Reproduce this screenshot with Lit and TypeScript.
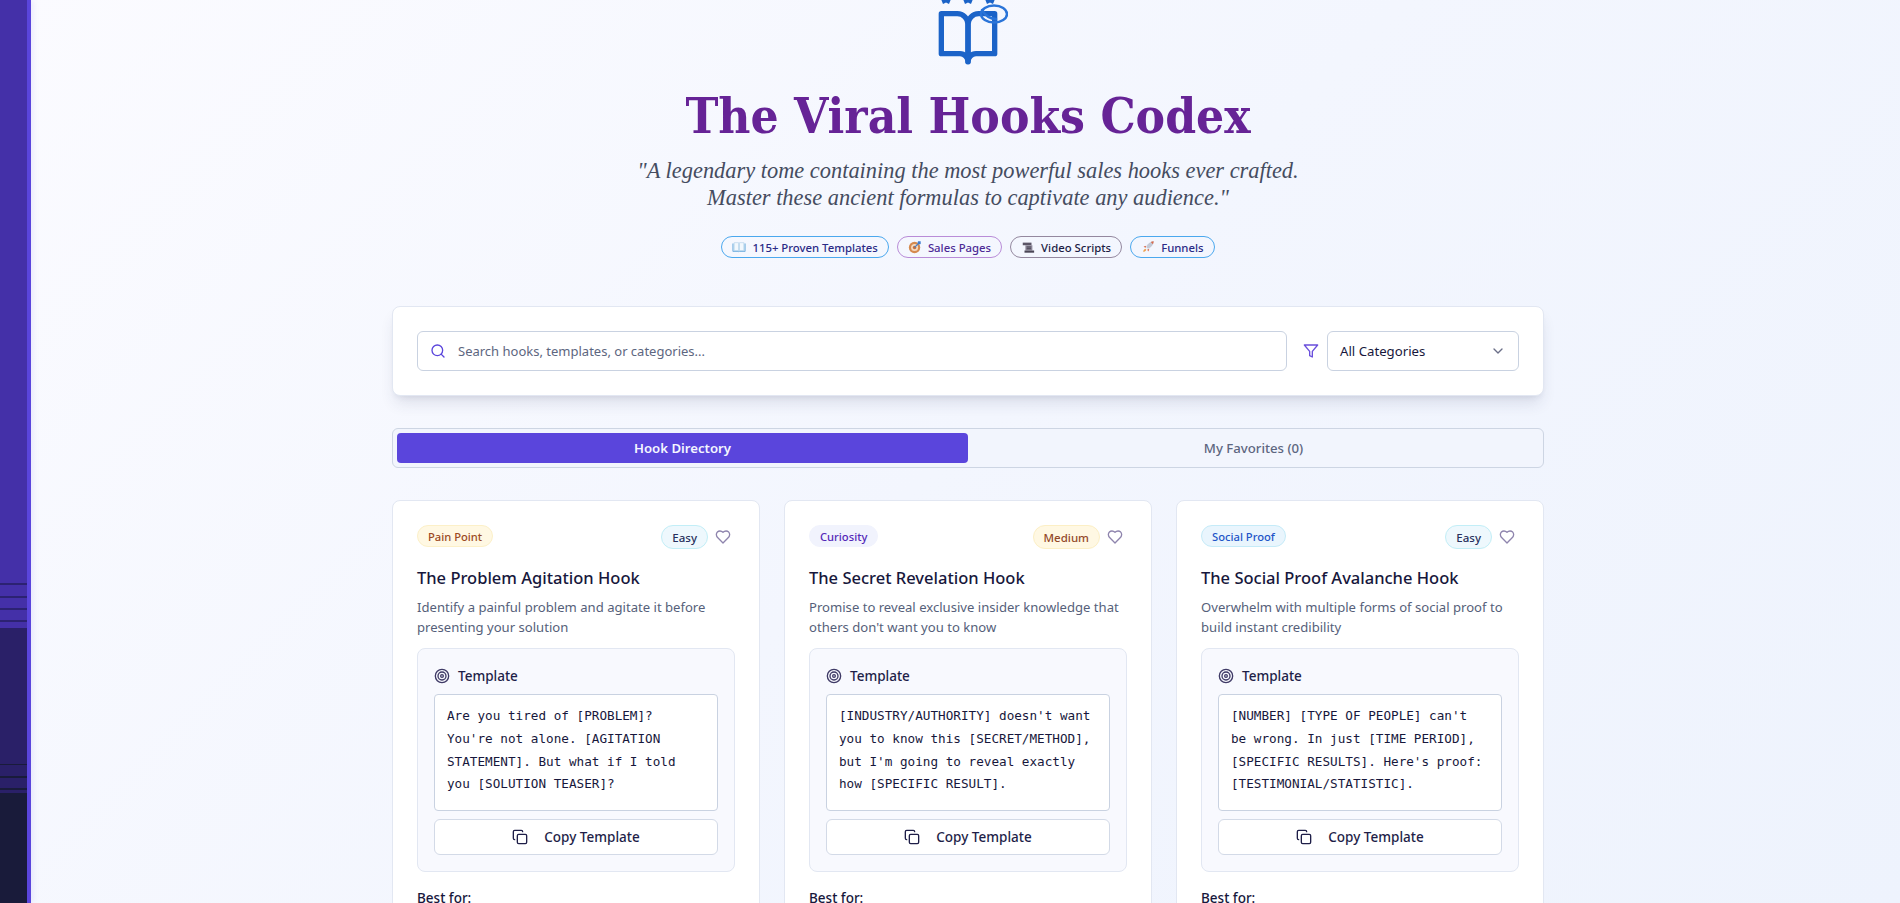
import { LitElement, html, css, svg } from "lit";
import { customElement } from "lit/decorators.js";

const hooks = [
  { cat: "Pain Point", catCls: "pain", level: "Easy", lvlCls: "easy", title: "The Problem Agitation Hook",
    desc: "Identify a painful problem and agitate it before presenting your solution",
    tpl: "Are you tired of [PROBLEM]? You're not alone. [AGITATION STATEMENT]. But what if I told you [SOLUTION TEASER]?" },
  { cat: "Curiosity", catCls: "cur", level: "Medium", lvlCls: "med", title: "The Secret Revelation Hook",
    desc: "Promise to reveal exclusive insider knowledge that others don't want you to know",
    tpl: "[INDUSTRY/AUTHORITY] doesn't want you to know this [SECRET/METHOD], but I'm going to reveal exactly how [SPECIFIC RESULT]." },
  { cat: "Social Proof", catCls: "soc", level: "Easy", lvlCls: "easy", title: "The Social Proof Avalanche Hook",
    desc: "Overwhelm with multiple forms of social proof to build instant credibility",
    tpl: "[NUMBER] [TYPE OF PEOPLE] can't be wrong. In just [TIME PERIOD], [SPECIFIC RESULTS]. Here's proof: [TESTIMONIAL/STATISTIC]." },
];

const bookEmoji = svg`<svg class="emo" viewBox="0 0 16 16"><path d="M1 4v9h6.2l.8.8.8-.8H15V4" fill="#cfe6f7" stroke="#6aa9dc"/><path d="M2.5 3h5v9h-5zM8.5 3h5v9h-5z" fill="#f2f8fd" stroke="#a9cbe6" stroke-width=".6"/></svg>`;
const targetEmoji = svg`<svg class="emo" viewBox="0 0 16 16"><circle cx="7.5" cy="8.5" r="6.5" fill="#d58a4f"/><circle cx="7.5" cy="8.5" r="4" fill="#f3d9bf"/><circle cx="7.5" cy="8.5" r="2" fill="#c8703a"/><path d="M7.5 8.5 13 3" stroke="#3f7fd0" stroke-width="1.4"/><path d="M11.5 1.5h3v3l-2 .6-1.6-1.6z" fill="#3f7fd0"/></svg>`;
const scrollEmoji = svg`<svg class="emo" viewBox="0 0 16 16"><path d="M2 3h10v3H2z" fill="#5b5566"/><path d="M5 6h8v6H5z" fill="#8d8798"/><path d="M4 12h11v2.5H4z" fill="#4b4656"/><path d="M6.5 8h5M6.5 10h5" stroke="#3d3948"/></svg>`;
const rocketEmoji = svg`<svg class="emo" viewBox="0 0 16 16"><path d="M14.5 1.5c-4 .3-6.8 2.5-8.5 6.5l2 2c4-1.7 6.2-4.5 6.5-8.5z" fill="#c3c9d6"/><path d="M14.5 1.5c-1.3.1-2.3.4-3.3.9l2.4 2.4c.5-1 .8-2 .9-3.3z" fill="#d9694a"/><path d="M6 6.5 3 7.5l2 1.5zM9.5 10 8.5 13l-1.500-2z" fill="#d9694a"/><path d="M5 10c-1.5.5-2.5 2-2.5 3.5 1.5 0 3-1 3.5-2.5z" fill="#eda04c"/></svg>`;

@customElement("app-root")
export class AppRoot extends LitElement {
  static styles = css`
    :host { display: block; height: 903px; overflow: hidden; font-family: "Noto Sans", "Open Sans", sans-serif; }
    * { box-sizing: border-box; }
    .shell { display: flex; height: 903px; background: linear-gradient(135deg, #fbfbff 0%, #f3f6fe 50%, #eef3fd 100%); }
    .rail {
      flex: none; width: 31px; height: 903px; border-right: 4px solid #5a45dc;
      box-shadow: 2px 0 6px rgba(90, 69, 220, 0.1);
      background:
        linear-gradient(to bottom,
          #4430a8 0 583px, #2c2272 583px 585px, #4430a8 585px 596px, #2c2272 596px 598px,
          #4430a8 598px 608px, #2c2272 608px 610px, #4430a8 610px 620px, #2c2272 620px 622px,
          #4430a8 622px 628px, #2a2068 628px 764px, #191b3a 764px 765px, #2a2068 765px 776px,
          #191b3a 776px 778px, #2a2068 778px 788px, #191b3a 788px 790px, #2a2068 790px 793px,
          #191b3a 793px 903px);
    }
    main { flex: 1; min-width: 0; padding-left: 5px; overflow: hidden; }
    .page { width: 1152px; margin: 0 auto; }
    header { display: flex; flex-direction: column; align-items: center; }
    .logo { display: block; width: 80px; height: 68px; }
    h1 {
      margin: 18px 0 0; font-family: "DejaVu Serif Condensed", "DejaVu Serif", serif; font-weight: 700;
      font-size: 49.2px; line-height: 60px; color: #662396; white-space: nowrap;
    }
    .sub {
      margin: 11px 0 0; text-align: center; font-family: "Liberation Serif", serif; font-style: italic;
      font-size: 22.4px; line-height: 27px; color: #454c60;
    }
    .chips { display: flex; gap: 8px; margin-top: 25px; }
    .chip {
      display: flex; align-items: center; gap: 6px; height: 22px; padding: 0 10px; border-radius: 11px;
      border: 1px solid #4ba8ee; font-size: 11.35px; font-weight: 500; color: #2a2a86; background: transparent;
    }
    .chip.v { border-color: #b98cd8; color: #4c2a96; }
    .chip.s { border-color: #94889f; color: #1c1c44; }
    .emo { width: 14px; height: 14px; flex: none; }
    .search {
      margin-top: 48px; height: 90px; display: flex; align-items: center; gap: 12px; padding: 0 24px;
      background: #fff; border: 1px solid #e2e7f2; border-radius: 8px;
      box-shadow: 0 10px 15px -3px rgba(40, 50, 90, 0.12), 0 4px 6px -4px rgba(40, 50, 90, 0.12);
    }
    .input {
      flex: 1; height: 40px; display: flex; align-items: center; gap: 12px; padding: 0 12px 0 12px;
      border: 1px solid #c9d2e1; border-radius: 6px; font-size: 13px; line-height: 20px; color: #5d6680;
    }
    .input svg { width: 16px; height: 16px; flex: none; color: #5a45dc; }
    .funnel { width: 16px; height: 16px; flex: none; color: #6a4fdc; margin-left: 4px; }
    .select {
      width: 192px; height: 40px; display: flex; align-items: center; justify-content: space-between; padding: 0 12px;
      border: 1px solid #c9d2e1; border-radius: 6px; font-size: 13.2px; color: #17173c; margin-left: -4px;
    }
    .select svg { width: 16px; height: 16px; color: #6b6f88; }
    .tabs {
      margin-top: 32px; height: 40px; display: grid; grid-template-columns: 1fr 1fr; padding: 4px; gap: 0;
      border: 1px solid #cdd5e3; border-radius: 6px; background: #f2f5fd;
    }
    .tab { display: flex; align-items: center; justify-content: center; border-radius: 4px; font-size: 13.2px; font-weight: 500; color: #5d6680; }
    .tab.on { background: #5a45dc; color: #f4f6ff; font-weight: 600; }
    .grid { margin-top: 32px; display: grid; grid-template-columns: repeat(3, 1fr); gap: 24px; }
    .card { height: 600px; padding: 24px; background: #fff; border: 1px solid #e2e7f2; border-radius: 8px; }
    .top { display: flex; justify-content: space-between; align-items: flex-start; }
    .tag {
      height: 22px; display: flex; align-items: center; padding: 0 10px; border-radius: 11px; font-size: 11.2px; font-weight: 500; border: 1px solid transparent;
    }
    .pain { background: #fff8e3; border-color: #fcf0c8; color: #9c4a24; }
    .cur { background: #f1f3fd; border-color: #f1f3fd; color: #5428b8; }
    .soc { background: #e9f5fd; border-color: #c5ebf8; color: #1f55c8; }
    .right { display: flex; align-items: center; gap: 8px; padding-right: 4px; }
    .lvl {
      height: 24px; display: flex; align-items: center; padding: 0 10px; border-radius: 12px; font-size: 11.5px; font-weight: 500; border: 1px solid; margin-right: -1px;
    }
    .easy { background: #eef8fd; border-color: #c2eef7; color: #27305c; }
    .med { background: #fff8e3; border-color: #fcefc5; color: #93492a; }
    .heart { width: 16px; height: 16px; color: #8e84ad; display: block; }
    h3 { margin: 15px 0 0; font-size: 16.5px; line-height: 28px; font-weight: 500; color: #17173c; white-space: nowrap; }
    .desc { margin: 5px 0 0; font-size: 13.1px; line-height: 20px; color: #565f7a; }
    .box { margin-top: 11px; height: 224px; padding: 16px; background: #f8f9fe; border: 1px solid #e2e7f2; border-radius: 8px; }
    .boxhead { display: flex; align-items: center; gap: 8px; height: 20px; margin-top: 1px; font-size: 13.5px; font-weight: 500; color: #1e1e48; }
    .boxhead svg { width: 16px; height: 16px; color: #3f3a66; }
    .code {
      margin-top: 8px; height: 117px; padding: 10px 12px 0; background: #fff; border: 1px solid #c9d2e1; border-radius: 4px;
      font-family: "DejaVu Sans Mono", monospace; font-size: 12.67px; line-height: 22.75px; color: #17173c;
    }
    .copy {
      margin-top: 8px; height: 36px; display: flex; align-items: center; justify-content: center; gap: 16px;
      background: #fff; border: 1px solid #d3dae7; border-radius: 6px; font-size: 13.5px; font-weight: 500; color: #1e1e48;
    }
    .copy svg { width: 16px; height: 16px; }
    .best { margin-top: 16px; font-size: 13.5px; line-height: 20px; font-weight: 500; color: #17173c; }
  `;

  private card(h: (typeof hooks)[number]) {
    return html`<article class="card">
      <div class="top">
        <span class="tag ${h.catCls}">${h.cat}</span>
        <div class="right">
          <span class="lvl ${h.lvlCls}">${h.level}</span>
          <svg class="heart" viewBox="0 0 24 24" fill="none" stroke="currentColor" stroke-width="2" stroke-linecap="round" stroke-linejoin="round"><path d="M19 14c1.49-1.46 3-3.21 3-5.5A5.5 5.5 0 0 0 16.5 3c-1.76 0-3 .5-4.5 2-1.5-1.5-2.74-2-4.5-2A5.5 5.5 0 0 0 2 8.5c0 2.3 1.5 4.05 3 5.5l7 7Z"/></svg>
        </div>
      </div>
      <h3>${h.title}</h3>
      <p class="desc">${h.desc}</p>
      <div class="box">
        <div class="boxhead">
          <svg viewBox="0 0 24 24" fill="none" stroke="currentColor" stroke-width="2"><circle cx="12" cy="12" r="10"/><circle cx="12" cy="12" r="6"/><circle cx="12" cy="12" r="2"/></svg>
          Template
        </div>
        <div class="code">${h.tpl}</div>
        <div class="copy">
          <svg viewBox="0 0 24 24" fill="none" stroke="currentColor" stroke-width="2" stroke-linecap="round" stroke-linejoin="round"><rect width="14" height="14" x="8" y="8" rx="2" ry="2"/><path d="M4 16c-1.1 0-2-.9-2-2V4c0-1.1.9-2 2-2h10c1.1 0 2 .9 2 2"/></svg>
          Copy Template
        </div>
      </div>
      <div class="best">Best for:</div>
    </article>`;
  }

  render() {
    return html`<div class="shell">
      <div class="rail"></div>
      <main><div class="page">
        <header>
          <svg class="logo" viewBox="0 0 80 68" fill="none" stroke="#1b63c8" stroke-linecap="round" stroke-linejoin="round">
            <g transform="translate(8 5.67) scale(2.667)" stroke-width="2">
              <path d="M2 3h6a4 4 0 0 1 4 4v14a3 3 0 0 0-3-3H2z"/>
              <path d="M22 3h-6a4 4 0 0 0-4 4v14a3 3 0 0 1 3-3h7z"/>
            </g>
            <path d="M13 -1 15 4l3-1.500 3 1.500 2-5zM35 -1 37 4l3-1.500 3 1.500 2-5zM57 -1 59 4l3-1.500 3 1.500 2-5z" fill="#1b63c8" stroke="none"/>
            <ellipse cx="66" cy="14" rx="13" ry="8.500" stroke="#2a74d8" stroke-width="2.500"/>
            <path d="M54 10c3 5 8 9 14 9" stroke="#2a74d8" stroke-width="2.500"/>
          </svg>
          <h1>The Viral Hooks Codex</h1>
          <p class="sub">"A legendary tome containing the most powerful sales hooks ever crafted.<br />Master these ancient formulas to captivate any audience."</p>
          <div class="chips">
            <span class="chip">${bookEmoji}115+ Proven Templates</span>
            <span class="chip v">${targetEmoji}Sales Pages</span>
            <span class="chip s">${scrollEmoji}Video Scripts</span>
            <span class="chip">${rocketEmoji}Funnels</span>
          </div>
        </header>
        <section class="search">
          <div class="input">
            <svg viewBox="0 0 24 24" fill="none" stroke="currentColor" stroke-width="2" stroke-linecap="round" stroke-linejoin="round"><circle cx="11" cy="11" r="8"/><path d="m21 21-4.3-4.3"/></svg>
            Search hooks, templates, or categories...
          </div>
          <svg class="funnel" viewBox="0 0 24 24" fill="none" stroke="currentColor" stroke-width="2" stroke-linecap="round" stroke-linejoin="round"><polygon points="22 3 2 3 10 12.46 10 19 14 21 14 12.46 22 3"/></svg>
          <div class="select">All Categories
            <svg viewBox="0 0 24 24" fill="none" stroke="currentColor" stroke-width="2" stroke-linecap="round" stroke-linejoin="round"><path d="m6 9 6 6 6-6"/></svg>
          </div>
        </section>
        <nav class="tabs">
          <div class="tab on">Hook Directory</div>
          <div class="tab">My Favorites (0)</div>
        </nav>
        <section class="grid">${hooks.map((h) => this.card(h))}</section>
      </div></main>
    </div>`;
  }
}
